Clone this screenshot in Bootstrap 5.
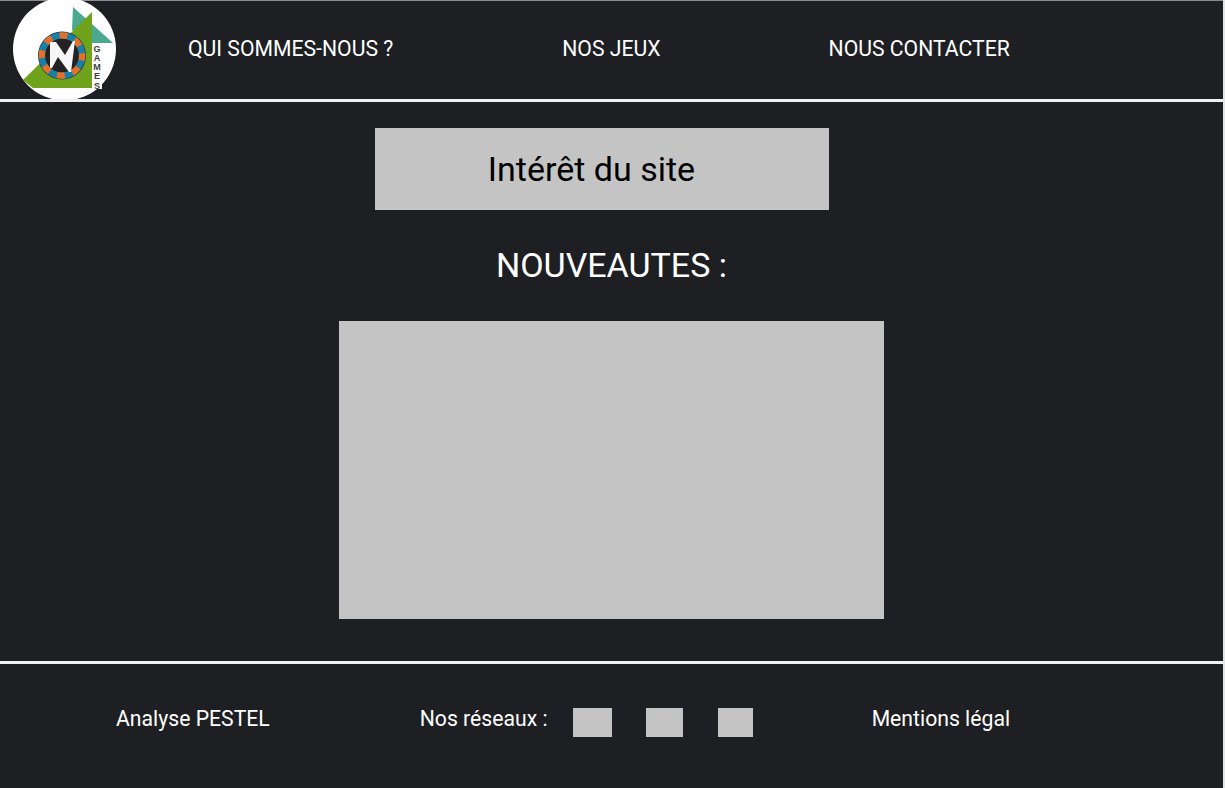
<!doctype html>
<html lang="fr">
<head>
<meta charset="utf-8">
<title>N Games</title>
<link href="https://cdn.jsdelivr.net/npm/bootstrap@5.3.0/dist/css/bootstrap.min.css" rel="stylesheet">
<style>
html,body{height:788px;overflow:hidden}
body{background:#e4e4e4;font-family:Roboto,"Liberation Sans",sans-serif;color:#fff}
.frame{width:1223px;height:788px;background:#1e1f23;border-top:1px solid #8d8d8f}
.top-bar{height:98px}
.logo-mark{width:106px;height:100px;margin-left:12px;margin-top:-1px;flex:none}
.top-link{color:#fff;font-size:21.2px;line-height:24px;text-decoration:none;white-space:nowrap;margin-bottom:2px}
.lnk-a{margin-left:70px}
.lnk-b{margin-left:169px}
.lnk-c{margin-left:168px}
.rule{height:3px;background:#f1f1f1}
.mid{height:560px}
.topic-box{width:454px;height:82px;background:#c4c4c4;color:#000;font-size:34px;margin-top:26px;margin-left:-19px;padding-right:21px}
.news-title{font-size:34px;line-height:42px;font-weight:400;margin:34px 0 35px}
.news-box{width:545px;height:298px;background:#c4c4c4}
.bottom-bar{height:124px}
.foot-txt{font-size:21.2px;line-height:24px;white-space:nowrap;margin-bottom:6px}
.ft-a{margin-left:116px}
.ft-b{margin-left:150px}
.ft-c{margin-left:119px}
.soc{height:29px;background:#c4c4c4;flex:none}
.s1{width:39px;margin-left:25px}
.s2{width:37px;margin-left:34px}
.s3{width:35px;margin-left:35px}
.bottom-inner{padding-bottom:8px}
</style>
</head>
<body>
<div class="frame d-flex flex-column">
  <header class="top-bar d-flex align-items-center">
    <svg class="logo-mark" viewBox="12 0 106 100" aria-label="Logo N Games">
      <circle cx="64.500" cy="49" r="51.500" fill="#fff"/>
      <polygon points="73,7 113,43 92,43 72,30" fill="#4aa98f"/>
      <polygon points="23,80 92,12 92,88 33,88" fill="#6fa31c"/>
      <circle cx="62" cy="55.500" r="24" fill="#26363f"/>
      <circle cx="62" cy="55.500" r="20" fill="none" stroke="#1a7fa8" stroke-width="6.500"/>
      <circle cx="62" cy="55.500" r="20" fill="none" stroke="#e5702a" stroke-width="6.500" stroke-dasharray="7.850 7.850" stroke-dashoffset="3"/>
      <circle cx="62" cy="55.500" r="16.800" fill="#232325"/>
      <polygon points="50,42 56,42 65,55 73,41 75,41 71,72 69,72 58,57 52,68 50,68" fill="#f6f6f6"/>
      <rect x="92" y="43" width="10" height="46" fill="#fff"/>
      <g font-family="Liberation Sans,sans-serif" font-weight="700" font-size="9" fill="#3d3d3d" text-anchor="middle">
        <text x="97" y="52">G</text><text x="97" y="61">A</text><text x="97" y="70">M</text><text x="97" y="79">E</text><text x="97" y="89">S</text>
      </g>
    </svg>
    <a class="top-link lnk-a" href="#">QUI SOMMES-NOUS ?</a>
    <a class="top-link lnk-b" href="#">NOS JEUX</a>
    <a class="top-link lnk-c" href="#">NOUS CONTACTER</a>
  </header>
  <div class="rule"></div>
  <main class="mid d-flex flex-column align-items-center">
    <div class="topic-box d-flex align-items-center justify-content-center">Intérêt du site</div>
    <h2 class="news-title">NOUVEAUTES :</h2>
    <div class="news-box"></div>
  </main>
  <div class="rule"></div>
  <footer class="bottom-bar d-flex align-items-center bottom-inner">
    <span class="foot-txt ft-a">Analyse PESTEL</span>
    <span class="foot-txt ft-b">Nos réseaux :</span>
    <span class="soc s1"></span>
    <span class="soc s2"></span>
    <span class="soc s3"></span>
    <span class="foot-txt ft-c">Mentions légal</span>
  </footer>
</div>
<script src="https://cdn.jsdelivr.net/npm/bootstrap@5.3.0/dist/js/bootstrap.bundle.min.js"></script>
</body>
</html>
